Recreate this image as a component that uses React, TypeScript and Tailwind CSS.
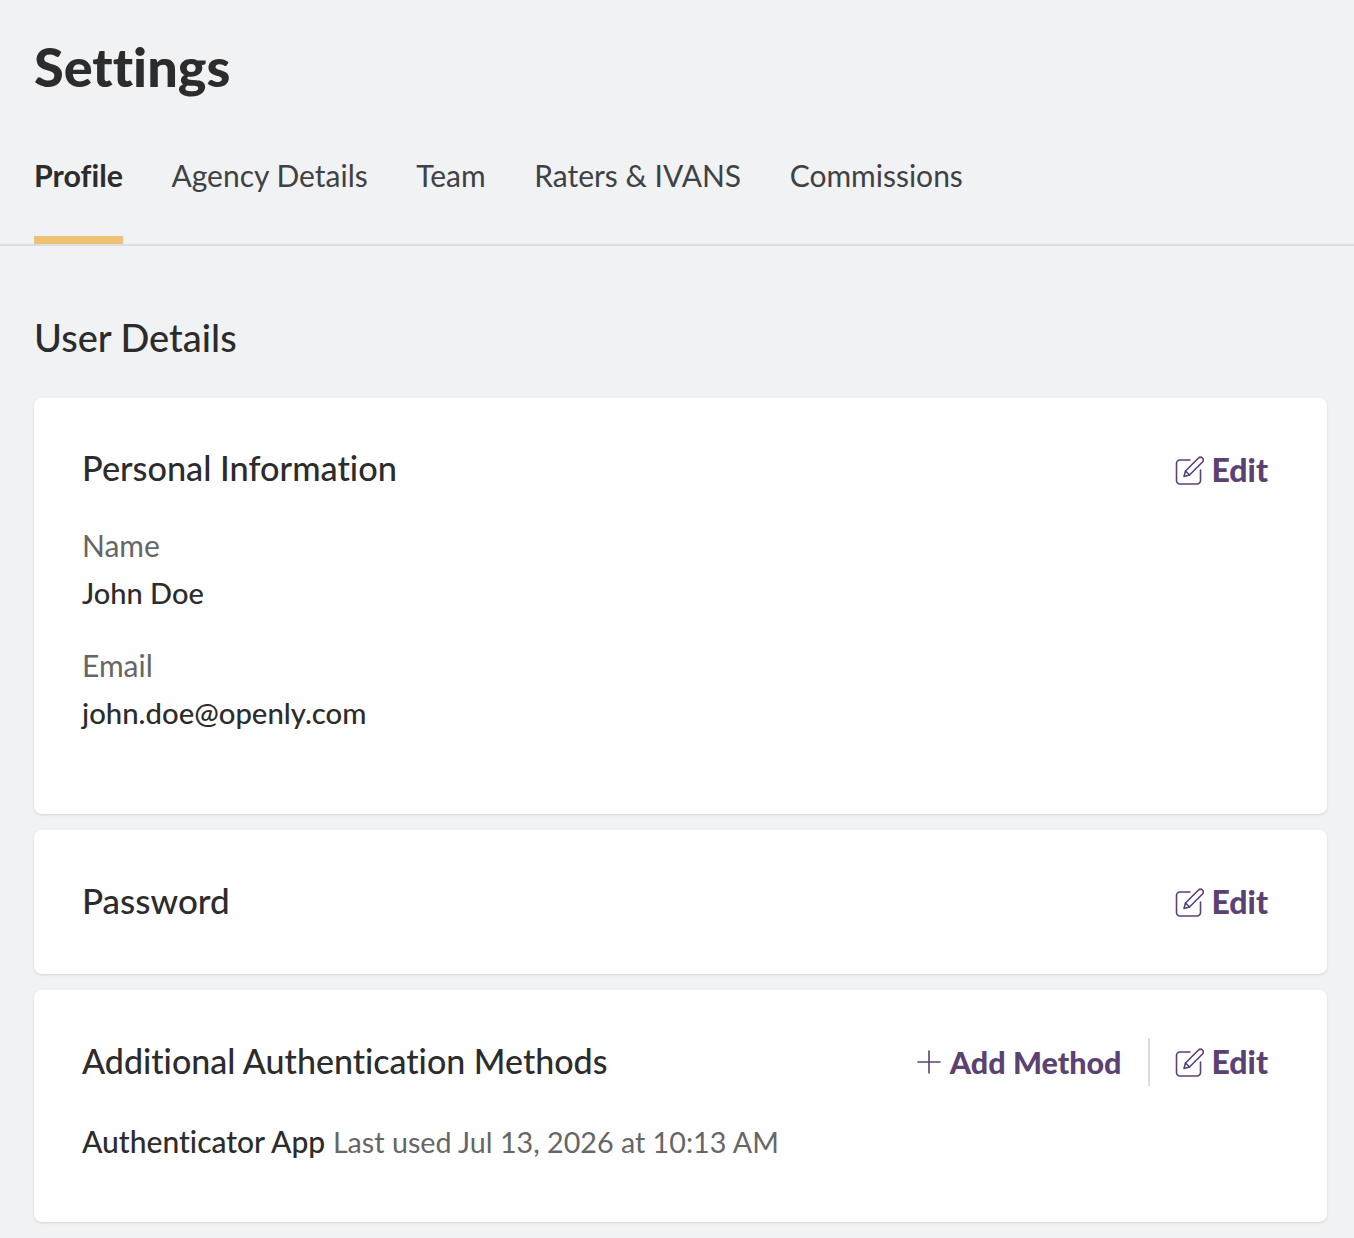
const tabs = ['Profile', 'Agency Details', 'Team', 'Raters & IVANS', 'Commissions']

const EditIcon = () => (
  <svg width="30" height="30" viewBox="0 0 30 30" fill="none" stroke="currentColor" strokeWidth="1.6" strokeLinejoin="round" strokeLinecap="round">
    <path d="M15 5H5a3.5 3.5 0 0 0-3.5 3.5v17A3.5 3.5 0 0 0 5 29h17a3.5 3.5 0 0 0 3.5-3.5V15" />
    <path d="M9 21.5l1.5-5.5L23.5 3a2.8 2.8 0 0 1 4 4L14.5 20z" />
    <path d="M10.5 16l4 4" />
  </svg>
)

const PlusIcon = () => (
  <svg width="24" height="24" viewBox="0 0 24 24" fill="none" stroke="currentColor" strokeWidth="1.6" strokeLinecap="round">
    <path d="M12 1v22M1 12h22" />
  </svg>
)

const EditButton = () => (
  <button className="flex items-center gap-[6px] text-[#5b4272]">
    <EditIcon />
    <span className="text-[32px] leading-[40px] font-black">Edit</span>
  </button>
)

export default function App() {
  return (
    <div className="min-h-[1238px] bg-[#f1f2f4] font-['Lato',sans-serif] text-[#2c2c2c] [font-variant-ligatures:none]">
      <div className="px-[34px] pt-[36px]">
        <h1 className="text-[54px] leading-[62px] font-black">Settings</h1>
      </div>

      {/* Tabs */}
      <div className="mt-[54px] flex gap-[48.5px] border-b-2 border-[#dcdde0] px-[34px]">
        {tabs.map((tab, i) => (
          <div
            key={tab}
            className={
              i === 0
                ? 'h-[92px] border-b-8 border-[#edc276] text-[30.4px] leading-[46px] font-bold'
                : 'h-[92px] text-[30px] leading-[46px] text-[#3f4144]'
            }
          >
            {tab}
          </div>
        ))}
      </div>

      <div className="pt-[68px] pr-[27px] pl-[34px]">
        <h2 className="text-[38px] leading-[46px] font-medium">User Details</h2>

        <div className="mt-[38px] flex flex-col gap-4">
          <section className="h-[416px] rounded-lg bg-white pt-[52px] pr-[59px] pl-[48px] shadow-sm">
            <div className="flex h-[40px] items-center justify-between">
              <h3 className="pb-1 text-[34.3px] font-medium">Personal Information</h3>
              <EditButton />
            </div>
            <p className="mt-[35px] text-[30px] leading-[40px] text-[#666]">Name</p>
            <p className="mt-[8px] text-[29px] leading-[40px] font-medium">John Doe</p>
            <p className="mt-[32px] text-[30px] leading-[40px] text-[#666]">Email</p>
            <p className="mt-[8px] text-[29.3px] leading-[40px] font-medium">john.doe@openly.com</p>
          </section>

          <section className="flex h-[144px] items-center justify-between rounded-lg bg-white pr-[59px] pl-[48px] shadow-sm">
            <h3 className="pb-1 text-[35px] font-medium">Password</h3>
            <EditButton />
          </section>

          <section className="h-[232px] rounded-lg bg-white pt-[48px] pr-[59px] pl-[48px] shadow-sm">
            <div className="flex h-[48px] items-center justify-between">
              <h3 className="pb-1 text-[34px] font-medium">Additional Authentication Methods</h3>
              <div className="flex items-center">
                <button className="flex items-center gap-[9px] text-[#5b4272]">
                  <PlusIcon />
                  <span className="text-[30.5px] leading-[40px] font-black">Add Method</span>
                </button>
                <div className="mr-[25px] ml-[27px] h-[48px] w-[2px] bg-[#dcdde0]" />
                <EditButton />
              </div>
            </div>
            <p className="mt-[35px] text-[30px] leading-[40px]">
              <span className="font-medium">Authenticator App</span>{' '}
              <span className="text-[28.7px] text-[#666]">Last used Jul 13, 2026 at 10:13 AM</span>
            </p>
          </section>
        </div>
      </div>
    </div>
  )
}
